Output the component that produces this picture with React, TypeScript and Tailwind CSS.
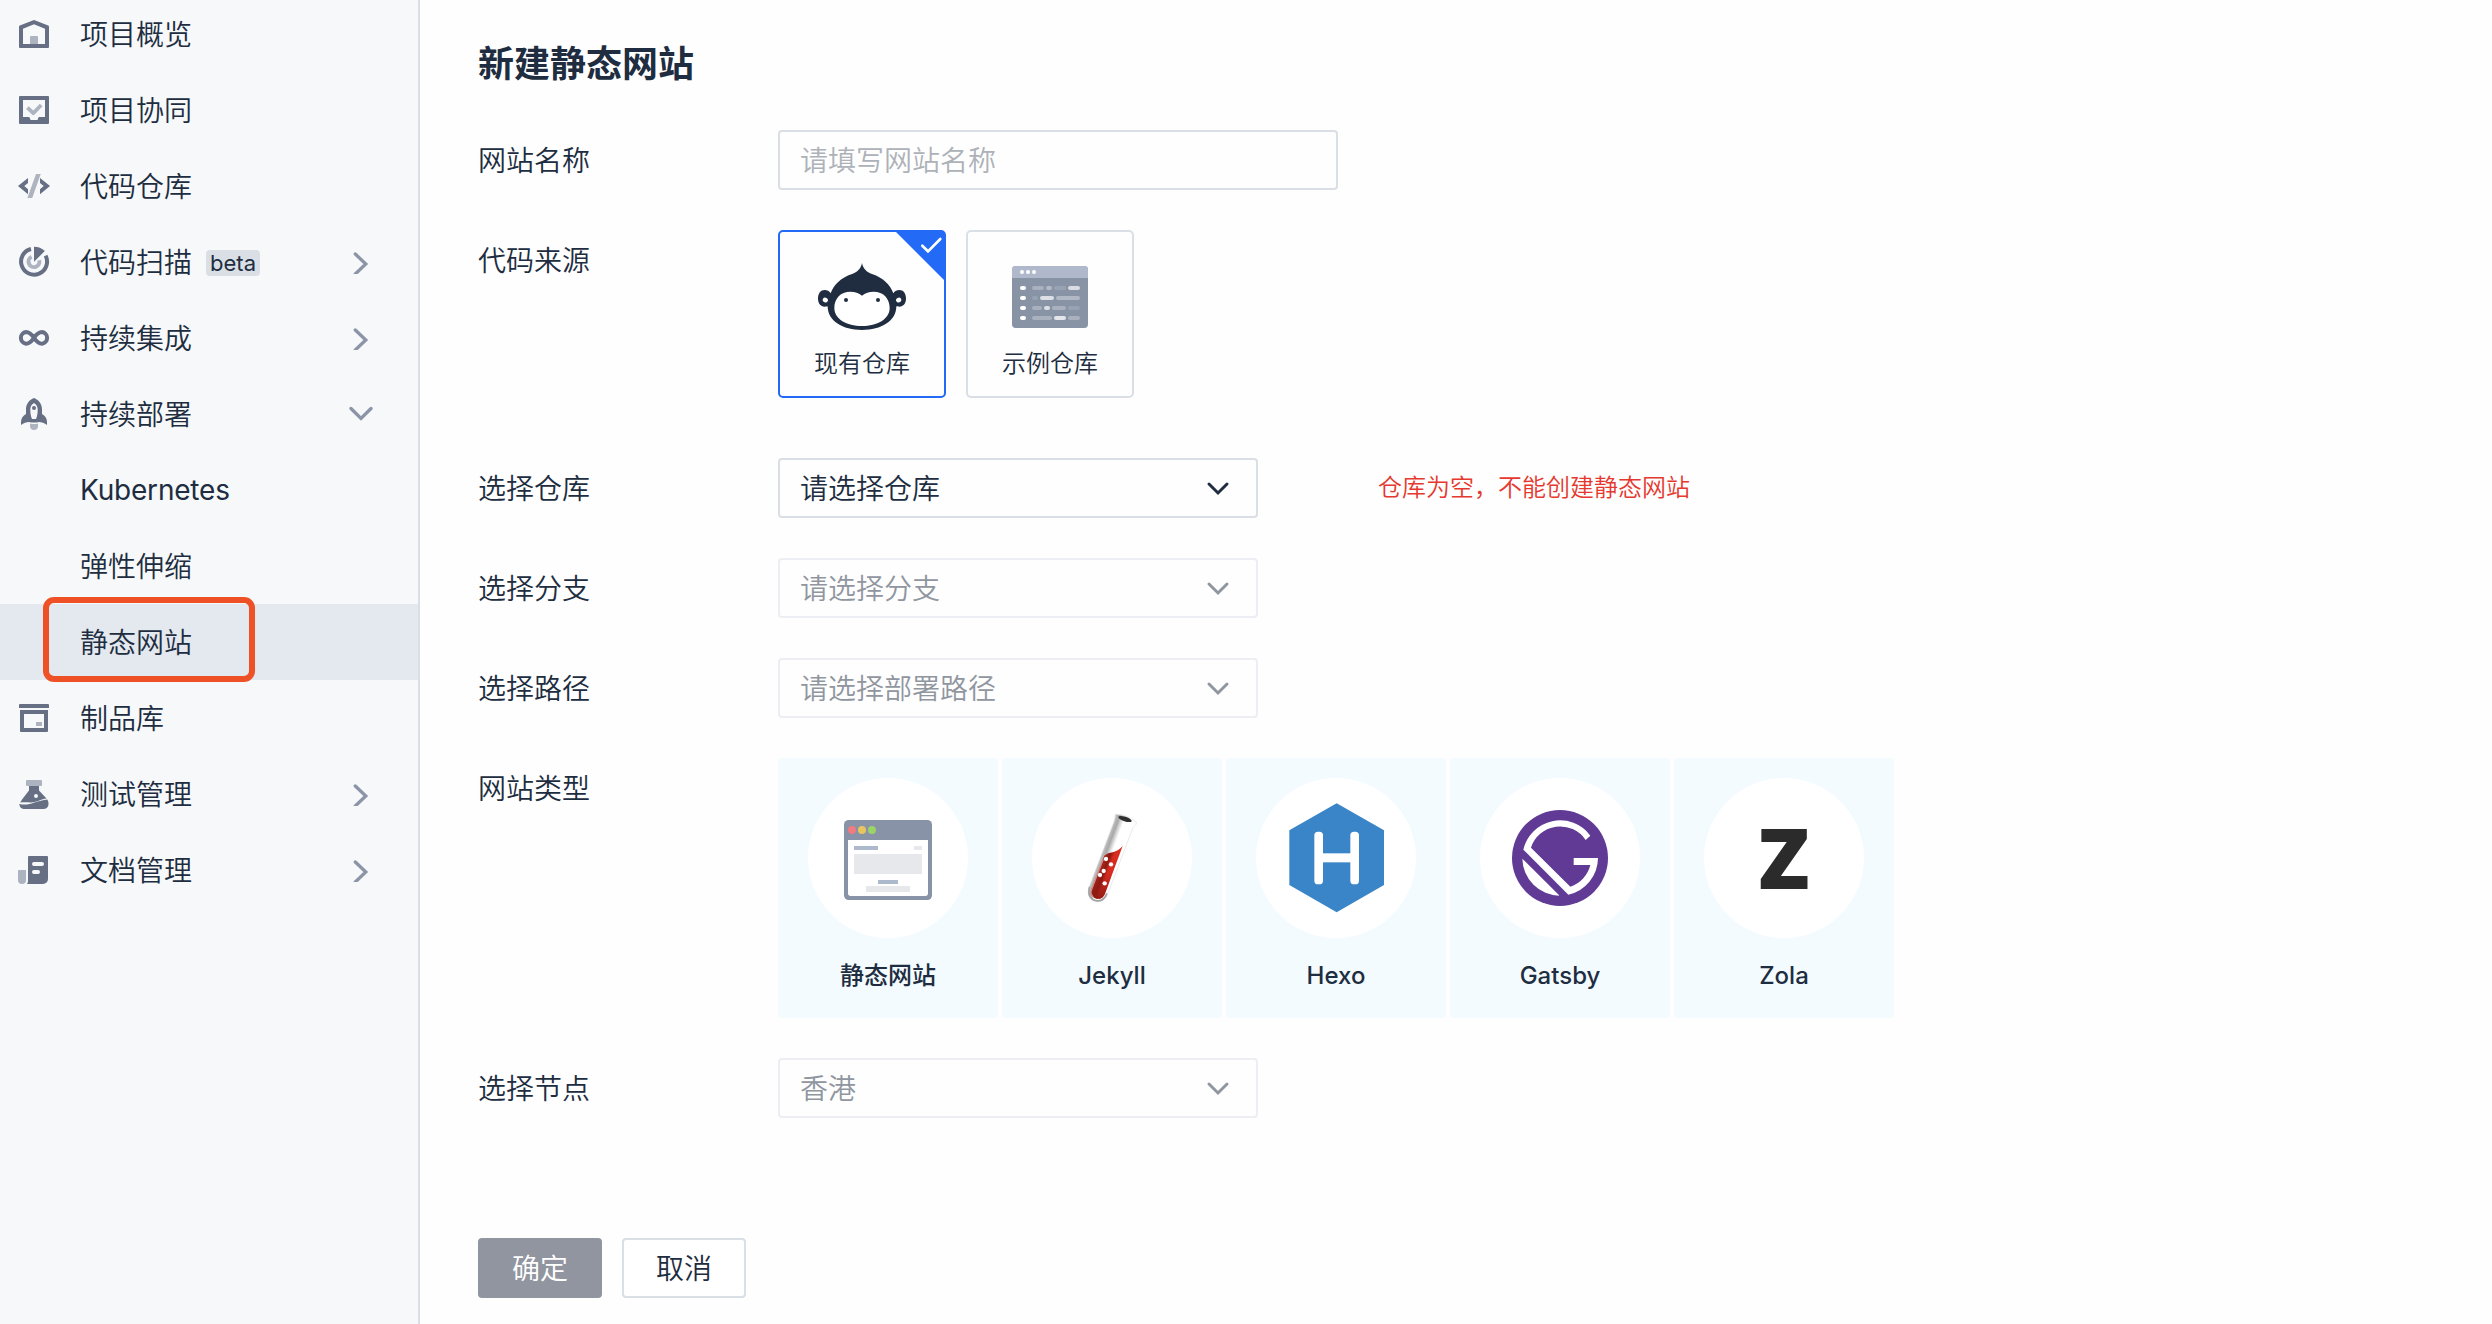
import type { ReactNode } from 'react';

const DARK = '#666f83';
const LIGHT = '#adb4bf';

function NavSvg({ children }: { children?: ReactNode }) {
  return (
    <svg className="size-8 shrink-0" viewBox="0 0 32 32" fill="none">
      {children}
    </svg>
  );
}

const icons: Record<string, ReactNode> = {
  home: (
    <NavSvg>
      <path fill={DARK} fillRule="evenodd" d="M16 2 30.2 7.6Q31 8 31 9V29Q31 30 30 30H2Q1 30 1 29V9Q1 8 1.8 7.6ZM16 6.3 5 10.8V26H27V10.8Z" />
      <path fill={LIGHT} d="M12 26V19q0-1 1-1h6q1 0 1 1v7z" />
    </NavSvg>
  ),
  task: (
    <NavSvg>
      <path fill={DARK} fillRule="evenodd" d="M2 2H30Q31 2 31 3V29Q31 30 30 30H2Q1 30 1 29V3Q1 2 2 2ZM5 6V23H10.5Q12 23 12 24.5T13.3 26H19Q20 26 20 24.5T21.5 23H27V6Z" />
      <path stroke={LIGHT} strokeWidth="3.8" d="M9.4 13.6 15.3 19.2 23.200 11" strokeLinejoin="round" />
    </NavSvg>
  ),
  code: (
    <NavSvg>
      <path fill={DARK} d="M0 16 10 8v5L6.3 16 10 19.3v5zM32 16 22 8v5l3.7 3L22 19.3v5z" />
      <path fill={LIGHT} d="M18 4h4.7L14.2 28H9.4z" />
    </NavSvg>
  ),
  scan: (
    <NavSvg>
      <path stroke={DARK} strokeWidth="4" d="M13 3.3A13 13 0 1 0 27.6 9.9" transform="translate(0 -.3)" />
      <path stroke={LIGHT} strokeWidth="4" d="M13.6 11.1A5.4 5.4 0 1 0 21.2 14.6" transform="translate(0 -.3)" />
      <path fill={DARK} d="M16 15.7V.7a15 15 0 0 1 10.8 4.4z" />
    </NavSvg>
  ),
  infinity: (
    <NavSvg>
      <path stroke={DARK} strokeWidth="4" d="M16 15.8C13.4 12 11.2 10 8 10a5.9 5.9 0 0 0 0 11.7c3.2 0 5.4-2.1 8-5.9s4.8-5.8 8-5.8a5.9 5.9 0 0 1 0 11.7c-3.2 0-5.4-2.1-8-5.9z" />
    </NavSvg>
  ),
  rocket: (
    <NavSvg>
      <path fill={DARK} fillRule="evenodd" d="M16 0c4.5 1.5 8 6 8 11v5c3 1.5 5 4.5 5 8v3c-2.5-2-5.5-3-8-3q-5 1-10 0c-2.500 0-5.500 1-8 3v-3c0-3.500 2-6.500 5-8v-5c0-5 3.500-9.500 8-11zM16 5c-2.300 1.300-3.700 3.500-3.700 6.500 0 3.500.4 6.500 1.700 9.500h4c1.300-3 1.700-6 1.700-9.500C19.700 8.500 18.300 6.300 16 5z" />
      <circle cx="16" cy="10" r="2" fill={DARK} />
      <path fill={LIGHT} d="M12 25.5q4 1 8 0v2.500a4 4 0 0 1-8 0z" />
    </NavSvg>
  ),
  box: (
    <NavSvg>
      <path fill={DARK} d="M1 6V3q0-1 1-1h28q1 0 1 1v3z" />
      <path fill={DARK} fillRule="evenodd" d="M2 8H30V29q0 1-1 1H3q-1 0-1-1zM6 12V26H26V12z" />
      <path fill={LIGHT} d="M18 20h6v4h-6z" />
    </NavSvg>
  ),
  flask: (
    <NavSvg>
      <rect x="8" y="2" width="16" height="6" rx="1" fill={LIGHT} />
      <path fill={DARK} fillRule="evenodd" d="M11 8h10v4.500l7.500 8c-5 .3-9 4-16 3.900-4 0-7-.2-10.300.1L4 21.500l7-9zM18 16a2 2 0 1 0 0 4 2 2 0 0 0 0-4z" />
      <path fill={DARK} d="M1.300 26c10 2.500 17-3.500 28-4.500 2.300 3.700 1.700 9.300-4 9.500H7c-3.700 0-5.500-2-5.700-5z" />
    </NavSvg>
  ),
  doc: (
    <NavSvg>
      <path fill={LIGHT} d="M0 17q0-1 1-1h7v10a4 4 0 0 1-8 0z" />
      <path fill={DARK} fillRule="evenodd" d="M11 2h18q1 0 1 1v22a5 5 0 0 1-5 5H9q1-1 1-3V3q0-1 1-1zM16 8a2 2 0 0 0 0 4h8a2 2 0 0 0 0-4zM16 16a2 2 0 0 0 0 4h4a2 2 0 0 0 0-4z" />
    </NavSvg>
  ),
  none: <NavSvg />,
};

type NavItem = { label: string; icon: string; arrow?: 'right' | 'down'; badge?: string; active?: boolean; latin?: boolean };

const navItems: NavItem[] = [
  { label: '项目概览', icon: 'home' },
  { label: '项目协同', icon: 'task' },
  { label: '代码仓库', icon: 'code' },
  { label: '代码扫描', icon: 'scan', arrow: 'right', badge: 'beta' },
  { label: '持续集成', icon: 'infinity', arrow: 'right' },
  { label: '持续部署', icon: 'rocket', arrow: 'down' },
  { label: 'Kubernetes', icon: 'none', latin: true },
  { label: '弹性伸缩', icon: 'none' },
  { label: '静态网站', icon: 'none', active: true },
  { label: '制品库', icon: 'box' },
  { label: '测试管理', icon: 'flask', arrow: 'right' },
  { label: '文档管理', icon: 'doc', arrow: 'right' },
];

function NavRow({ item }: { item: NavItem }) {
  return (
    <div className={`relative flex h-[76px] items-center pr-[45px] pl-[18px] ${item.active ? 'bg-[#e4e8ef]' : ''}`}>
      {icons[item.icon]}
      <span className={`ml-[30px] ${item.latin ? 'font-[380] tracking-[-0.007em]' : 'mt-[2px]'}`}>{item.label}</span>
      {item.badge && (
        <span className="mt-[2px] ml-[14px] flex h-[26px] w-[54px] items-center justify-center rounded bg-[#dadfe6] text-[22px] leading-none font-normal">
          {item.badge}
        </span>
      )}
      {item.arrow && (
        <svg className="ml-auto h-6 w-6" viewBox="0 0 24 24" fill="none" stroke="#8c95a8" strokeWidth="3.3" strokeLinecap="round">
          {item.arrow === 'right' ? <path d="M6.3 4 16.8 14 6.3 24" /> : <path d="M2 6.5 12 16.5 22 6.5" />}
        </svg>
      )}
      {item.active && <div className="absolute top-[-7px] left-[43px] z-10 h-[85px] w-[212px] rounded-[11px] border-[6px] border-[#ee5126]" />}
    </div>
  );
}

function Row({ label, className, children }: { label: string; className: string; children: ReactNode }) {
  return (
    <div className={`flex items-start ${className}`}>
      <div className="flex h-[60px] w-[300px] items-center pt-[2px]">{label}</div>
      {children}
    </div>
  );
}

function Select({ text, enabled }: { text: string; enabled?: boolean }) {
  return (
    <div
      className={`flex h-[60px] w-[480px] items-center justify-between rounded border-2 pr-[26px] pl-5 ${
        enabled ? 'border-[#dadfe6] text-[#202d40]' : 'border-[#edeef3] text-[#9096a0]'
      }`}
    >
      <span className="mt-[2px]">{text}</span>
      <svg className="h-6 w-6" viewBox="0 0 24 24" fill="none" stroke="currentColor" strokeWidth="3" strokeLinecap="round">
        <path d="M3 8 12 17 21 8" />
      </svg>
    </div>
  );
}

function MonkeyIcon() {
  return (
    <svg className="h-[67px] w-[88px]" viewBox="144 129 264 201">
      <path
        fill="#202d40"
        d="M276 129C279 146 290 156 306 162C340 174 361 194 370 220C374 213 381 210 388 210C400 210 408 220 408 235C408 251 400 260 388 260C385 260 381 260 379 259C379 303 334 330 276 330C218 330 173 303 173 259C171 260 167 260 164 260C152 260 144 251 144 235C144 220 152 210 164 210C171 210 178 213 182 220C191 194 212 174 246 162C262 156 273 146 276 129Z"
      />
      <path fill="#fff" d="M276 227C267 219 255 215 241 215C212 215 193 235 193 264C193 297 230 318 276 318C322 318 359 297 359 264C359 235 340 215 311 215C297 215 285 219 276 227Z" />
      <ellipse cx="166" cy="240" rx="8" ry="7" fill="#fff" transform="rotate(30 166 240)" />
      <ellipse cx="386" cy="240" rx="8" ry="7" fill="#fff" transform="rotate(-30 386 240)" />
      <circle cx="228" cy="240" r="6" fill="#202d40" />
      <circle cx="324" cy="240" r="6" fill="#202d40" />
    </svg>
  );
}

/* Each segment: x, width, colour; one list per line of the sample code window. */
const codeLines: [number, number, string][][] = [
  [[786, 36, '#a9b1be'], [828, 18, '#b2bac7'], [852, 36, '#97a3b3'], [894, 36, '#d9dce3']],
  [[786, 18, '#97a3b3'], [810, 42, '#dcdfe6'], [858, 72, '#b2b9c6']],
  [[786, 30, '#a9b1be'], [822, 18, '#dcdfe6'], [846, 42, '#a9b1be'], [894, 36, '#97a3b3']],
  [[786, 60, '#a9b1be'], [852, 36, '#e4e6eb'], [894, 36, '#a9b1be']],
];

function CodeWindowIcon() {
  return (
    <svg className="h-[62px] w-[76px]" viewBox="726 138 228 186">
      <rect x="726" y="138" width="228" height="186" rx="11" fill="#8893a5" />
      <path d="M726 174V149q0-11 11-11H943q11 0 11 11V174z" fill="#b0b9cb" />
      {[756, 774, 792].map((x) => (
        <circle key={x} cx={x} cy="156" r="6" fill="#fff" />
      ))}
      {codeLines.map((segments, i) => (
        <g key={i}>
          <rect x="750" y={198 + i * 30} width="18" height="12" rx="6" fill="#fff" />
          {segments.map(([x, w, fill]) => (
            <rect key={x} x={x} y={198 + i * 30} width={w} height="12" rx="6" fill={fill} />
          ))}
        </g>
      ))}
    </svg>
  );
}

function StaticIcon() {
  return (
    <svg className="size-40" viewBox="114 84 480 480">
      <rect x="222" y="210" width="264" height="240" rx="14" fill="#8893a7" />
      <path fill="#fff" d="M234 270H474V430q0 8-8 8H242q-8 0-8-8z" />
      <circle cx="246" cy="240" r="12" fill="#f07b80" />
      <circle cx="276" cy="240" r="12" fill="#e8c65f" />
      <circle cx="306" cy="240" r="12" fill="#9ad368" />
      <path fill="#adbace" d="M252 288h72v12h-72zM324 390h60v12h-60z" />
      <path fill="#e6e8ec" d="M432 288h24v12h-24zM252 312h204v60H252zM288 408h132v18H288z" />
    </svg>
  );
}

function JekyllIcon() {
  return (
    <svg className="size-40" viewBox="786 84 480 480">
      <defs>
        <linearGradient id="glass" gradientUnits="userSpaceOnUse" x1="995" y1="310" x2="1052" y2="331">
          <stop offset="0" stopColor="#c4c4c4" />
          <stop offset=".2" stopColor="#a8a8a8" />
          <stop offset=".36" stopColor="#dedede" />
          <stop offset=".48" stopColor="#fff" />
        </linearGradient>
        <linearGradient id="liquid" gradientUnits="userSpaceOnUse" x1="990" y1="360" x2="1025" y2="373">
          <stop offset="0" stopColor="#a8231a" />
          <stop offset=".35" stopColor="#8c1a12" />
          <stop offset=".65" stopColor="#d92c20" />
          <stop offset="1" stopColor="#d92c20" />
        </linearGradient>
        <linearGradient id="depth" x1="0" y1="0" x2="0" y2="1">
          <stop offset=".5" stopColor="#8c1a12" stopOpacity="0" />
          <stop offset="1" stopColor="#8c1a12" stopOpacity=".9" />
        </linearGradient>
      </defs>
      <path fill="url(#glass)" stroke="#e0e0e0" strokeWidth="2" d="M1036 193Q1070 193 1099 216Q1101 224 1089 233L1014 430C1006 450 992 457 977 454C959 449 951 434 956 415L1032 215Q1036 203 1036 193Z" />
      <path fill="none" stroke="#a3a3a3" strokeWidth="5" d="M959 410C952 434 962 449 978 452C992 455 1004 448 1011 430" />
      <ellipse cx="1065" cy="207" rx="21" ry="7" fill="#303030" transform="rotate(18 1065 207)" />
      <path fill="url(#liquid)" d="M1003 317Q1013 308 1028 307Q1046 302 1058 288L1006 428C1001 443 992 448 980 446C966 443 960 431 964 418Z" />
      <path fill="url(#depth)" d="M1003 317Q1013 308 1028 307Q1046 302 1058 288L1006 428C1001 443 992 448 980 446C966 443 960 431 964 418Z" />
      <path fill="none" stroke="#cf8d89" strokeWidth="4" d="M1000 327 965 418C961 428 965 437 970 441" />
      {[[1008, 327], [1023, 343], [1001, 363], [990, 375], [1004, 400]].map(([x, y]) => (
        <circle key={y} cx={x} cy={y} r="6.5" fill="#fff" />
      ))}
    </svg>
  );
}

function HexoIcon() {
  return (
    <svg className="size-40" viewBox="108 84 480 480">
      <path fill="#3a85c7" d="M350 160 492 241V405L350 487 208 405V241Z" />
      <g fill="#fff">
        <rect x="283" y="245" width="26" height="158" rx="11" />
        <rect x="391" y="245" width="26" height="158" rx="11" />
        <rect x="300" y="310" width="100" height="27" />
      </g>
    </svg>
  );
}

function GatsbyIcon() {
  return (
    <svg className="size-40" viewBox="780 84 480 480">
      <circle cx="1020" cy="324" r="144" fill="#603a94" />
      <path fill="#fff" d="M1111 257A113 113 0 0 0 910 299L1045 434A113 113 0 0 0 1134 324H1061V345H1111A92 92 0 0 1 1051 410L933 293A92 92 0 0 1 1097 270Z" />
      <path fill="#fff" d="M907 326A113 113 0 0 0 1019 437Z" />
    </svg>
  );
}

const siteTypes: { name: string; icon: ReactNode }[] = [
  { name: '静态网站', icon: <StaticIcon /> },
  { name: 'Jekyll', icon: <JekyllIcon /> },
  { name: 'Hexo', icon: <HexoIcon /> },
  { name: 'Gatsby', icon: <GatsbyIcon /> },
  {
    name: 'Zola',
    icon: <span className="mb-[3px] font-['Open_Sans'] text-[84px] leading-none font-extrabold text-[#2b2b2b]">Z</span>,
  },
];

export default function App() {
  return (
    <div className="flex h-screen overflow-hidden bg-[#fefefe] font-['Inter','Noto_Sans_CJK_SC',sans-serif] text-[28px] leading-none font-[350] whitespace-nowrap text-[#202d40]">
      <aside className="w-[420px] shrink-0 border-r-2 border-[#dadfe6] bg-[#f7f8fa]">
        <nav className="-mt-1">
          {navItems.map((item) => (
            <NavRow key={item.label} item={item} />
          ))}
        </nav>
      </aside>

      <main className="flex-1 pl-[58px]">
        <h1 className="flex h-[130px] items-center pb-[2px] text-[36px] font-bold">新建静态网站</h1>

        <Row label="网站名称" className="">
          <div className="flex h-[60px] w-[560px] items-center rounded border-2 border-[#dadfe6] pt-[2px] pl-5 text-[#adb2b8]">请填写网站名称</div>
        </Row>

        <Row label="代码来源" className="mt-10">
          <div className="flex gap-5 text-[24px]">
            <div className="relative flex size-[168px] flex-col items-center rounded-[5px] border-2 border-[#236bf7] pt-[31px]">
              <svg className="absolute top-0 right-0 size-12" viewBox="0 0 48 48" fill="none">
                <path d="M0 0H48V48Z" fill="#236bf7" />
                <path d="M26.3 13.7 32 19.3 44.3 7" stroke="#fff" strokeWidth="2.6" strokeLinecap="round" />
              </svg>
              <MonkeyIcon />
              <span className="mt-[22px]">现有仓库</span>
            </div>
            <div className="flex size-[168px] flex-col items-center rounded-[5px] border-2 border-[#dadfe6] pt-[34px]">
              <CodeWindowIcon />
              <span className="mt-[24px]">示例仓库</span>
            </div>
          </div>
        </Row>

        <Row label="选择仓库" className="mt-[60px]">
          <Select text="请选择仓库" enabled />
          <span className="ml-[120px] flex h-[60px] items-center text-[24px] text-[#e5392f]">仓库为空，不能创建静态网站</span>
        </Row>
        <Row label="选择分支" className="mt-10">
          <Select text="请选择分支" />
        </Row>
        <Row label="选择路径" className="mt-10">
          <Select text="请选择部署路径" />
        </Row>

        <Row label="网站类型" className="mt-10">
          <div className="flex gap-1">
            {siteTypes.map((t) => (
              <div key={t.name} className="flex h-[260px] w-[220px] flex-col items-center rounded bg-[#f3fbff] pt-5">
                <div className="flex size-40 items-center justify-center overflow-hidden rounded-full bg-white">{t.icon}</div>
                <span className="mt-[26px] text-[24px] font-medium">{t.name}</span>
              </div>
            ))}
          </div>
        </Row>

        <Row label="选择节点" className="mt-10">
          <Select text="香港" />
        </Row>

        <div className="mt-[120px] flex gap-5">
          <button className="h-[60px] w-[124px] rounded bg-[#9195a0] pt-[2px] text-white">确定</button>
          <button className="h-[60px] w-[124px] rounded border-2 border-[#dadfe6] bg-white pt-[2px]">取消</button>
        </div>
      </main>
    </div>
  );
}
